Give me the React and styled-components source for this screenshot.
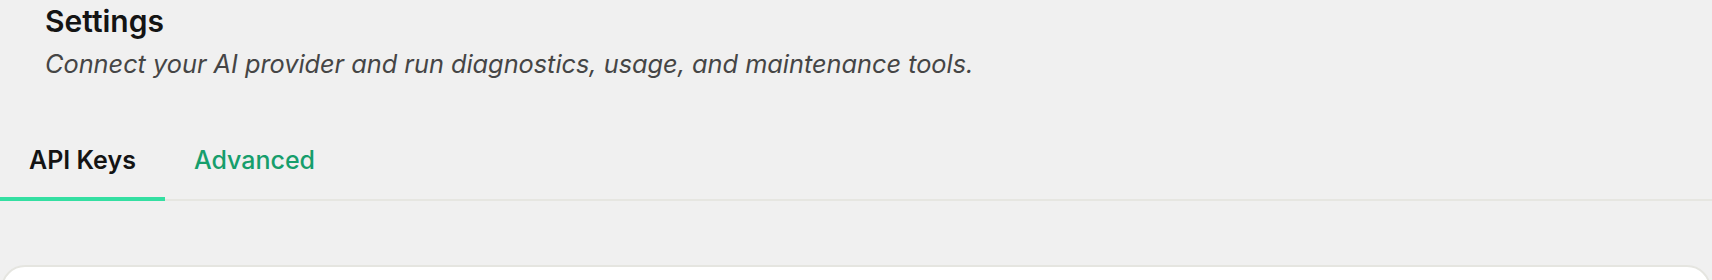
import styled, { createGlobalStyle } from "styled-components";
import { useState } from "react";

const GlobalStyle = createGlobalStyle`
    html, body {
        margin: 0;
        padding: 0;
        background: #f0f0f0;
        font-family: Inter, "Noto Sans", sans-serif;
    }
`;

const Page = styled.div`
    box-sizing: border-box;
    display: flex;
    flex-direction: column;
    height: 280px;
    overflow: hidden;
    width: 100%;
`;

const Header = styled.header`
    display: flex;
    flex-direction: column;
    gap: 8px;
    padding: 3px 0 0 45px;
`;

const Title = styled.h1`
    color: #141414;
    font-size: 30px;
    font-weight: 600;
    line-height: 36px;
    margin: 0;
`;

const Subtitle = styled.p`
    color: #454545;
    font-size: 25.3px;
    font-style: italic;
    line-height: 34px;
    margin: 0;
`;

const TabBar = styled.nav`
    border-bottom: 2px solid #e6e6e1;
    display: flex;
    margin-top: 52px;
`;

const Tab = styled.button`
    background: none;
    border: none;
    border-bottom: 4px solid ${(p) => (p.$active ? "#34dfa2" : "transparent")};
    color: ${(p) => (p.$active ? "#141414" : "#169e6c")};
    cursor: pointer;
    font-family: inherit;
    font-size: 25px;
    font-weight: ${(p) => (p.$active ? 600 : 500)};
    line-height: 30px;
    margin-bottom: -2px;
    padding: 12px 29px 22px;
`;

const Card = styled.section`
    background: #ffffff;
    border: 2px solid #e5e5e0;
    border-radius: 24px;
    box-sizing: border-box;
    flex: none;
    height: 200px;
    margin: 64px 1px 0;
`;

const tabs = ["API Keys", "Advanced"];

const App = () => {
    const [active, setActive] = useState("API Keys");

    return (
        <Page>
            <GlobalStyle />
            <Header>
                <Title>Settings</Title>
                <Subtitle>
                    Connect your AI provider and run diagnostics, usage, and maintenance tools.
                </Subtitle>
            </Header>
            <TabBar>
                {tabs.map((t) => (
                    <Tab key={t} $active={t === active} onClick={() => setActive(t)}>
                        {t}
                    </Tab>
                ))}
            </TabBar>
            <Card />
        </Page>
    );
};

export default App;
